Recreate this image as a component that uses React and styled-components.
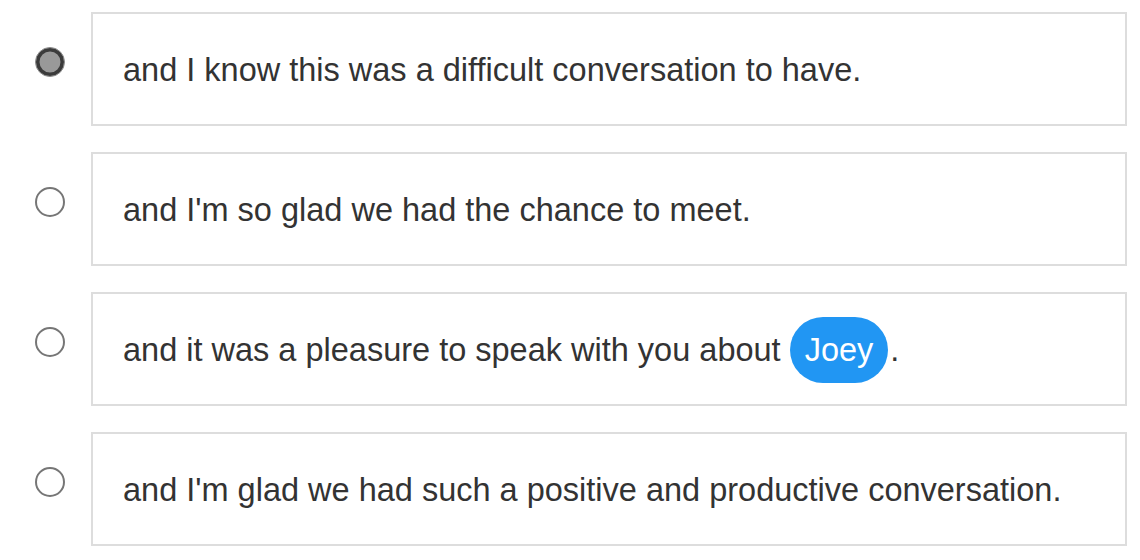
import React from 'react';
import styled, { createGlobalStyle } from 'styled-components';

const GlobalStyle = createGlobalStyle`
    body {
        margin: 0;
        background: #fff;
        font-family: "Liberation Sans", Arial, Helvetica, sans-serif;
    }
`

const options = [
    { id: 1, parts: ['and I know this was a difficult conversation to have.'] },
    { id: 2, parts: ["and I'm so glad we had the chance to meet."] },
    { id: 3, parts: ['and it was a pleasure to speak with you about ', { tag: 'Joey' }, '.'] },
    { id: 4, parts: ["and I'm glad we had such a positive and productive conversation."] },
];

function App() {
    const selected = 1;

    return (
        <>
            <GlobalStyle />
            <OptionList>
                {options.map(option => (
                    <OptionRow key={option.id}>
                        <RadioCell>
                            <Radio checked={option.id === selected} />
                        </RadioCell>
                        <OptionCard>
                            {option.parts.map((part, i) =>
                                typeof part === 'string'
                                    ? <span key={i}>{part}</span>
                                    : <NameTag key={i}>{part.tag}</NameTag>
                            )}
                        </OptionCard>
                    </OptionRow>
                ))}
            </OptionList>
        </>
    );
}

export default App;

const OptionList = styled.div`
    display: flex;
    flex-direction: column;
    gap: 26px;
    padding: 12px 13px 0 0;
`

const OptionRow = styled.div`
    display: flex;
    align-items: flex-start;
`

const RadioCell = styled.div`
    width: 91px;
    flex-shrink: 0;
    display: flex;
    justify-content: flex-end;
    padding: 35px 26px 0 0;
    box-sizing: border-box;
`

const Radio = styled.span`
    display: block;
    width: 30px;
    height: 30px;
    box-sizing: border-box;
    border-radius: 50%;
    border: ${props => props.checked ? '1.5px solid #8a8a8a' : '2px solid #767676'};
    background: ${props => props.checked ? '#999' : '#fff'};
    box-shadow: ${props => props.checked ? 'inset 0 0 0 3.5px #3b3b3b' : 'none'};
`

const OptionCard = styled.div`
    flex: 1;
    height: 114px;
    box-sizing: border-box;
    border: 2px solid #dddddd;
    padding: 2px 30px 0;
    display: flex;
    align-items: center;
    font-size: 32.5px;
    color: #333;
    white-space: pre;
`

const NameTag = styled.span`
    display: inline-flex;
    align-items: center;
    justify-content: center;
    height: 66px;
    padding: 0 15px;
    margin: 0 2px 0 0;
    border-radius: 33px;
    background: #2196f3;
    color: #fff;
`
